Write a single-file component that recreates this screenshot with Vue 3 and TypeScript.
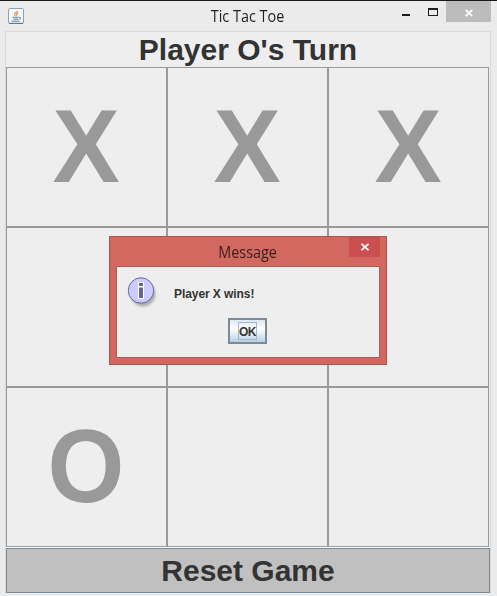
<script setup lang="ts">
import { ref } from 'vue'

type Mark = 'X' | 'O' | ''

const board = ref<Mark[]>(['X', 'X', 'X', '', '', '', 'O', '', ''])
const status = ref("Player O's Turn")
const dialogOpen = ref(true)

function reset() {
  board.value = board.value.map(() => '')
}
</script>

<template>
  <main class="window">
    <header class="titlebar">
      <svg class="java" viewBox="0 0 16 16" width="16" height="16">
        <rect x=".5" y=".5" width="15" height="15" rx="1.2" fill="#f5f8fa" stroke="#8ca0b2" />
        <path d="M1 15.3h14" stroke="#54708a" />
        <path d="M9.5 2.8C9 4.600 5.600 5 6.600 7l.9 1M10.300 4.800c-2 1-2.200 1.700-1.300 3" fill="none" stroke="#e08b3e" stroke-width="1.1" />
        <path d="M4.500 9.300h6M5.500 11.200h5M3.500 13.200h8M11 9.300c2.500-.4 2 1.800.2 2" fill="none" stroke="#567890" stroke-width=".95" />
      </svg>
      <h1 class="title"><span>Tic Tac Toe</span></h1>
      <div class="controls">
        <svg viewBox="0 0 50 24" width="50" height="24">
          <rect x="4" y="13" width="8" height="2" fill="#1c1c1c" />
          <path d="M30 7h10v8H30zM31 9v5h8V9z" fill="#1c1c1c" fill-rule="evenodd" />
        </svg>
        <button class="close" aria-label="Close">
          <svg viewBox="0 0 8 8" width="8" height="8"><path d="M.7.8l6.600 6.400M7.300.8L.7 7.200" stroke="#fff" stroke-width="1.7" /></svg>
        </button>
      </div>
    </header>

    <section class="client">
      <div class="status"><span>{{ status }}</span></div>
      <div class="grid">
        <div v-for="(mark, i) in board" :key="i" class="cell">
          <span :class="{ round: mark === 'O' }">{{ mark }}</span>
        </div>
      </div>
      <button class="reset" @click="reset"><span>Reset Game</span></button>
    </section>

    <div v-if="dialogOpen" class="dialog">
      <div class="dialog-bar">
        <span class="dialog-title">Message</span>
        <button class="dialog-close" aria-label="Close" @click="dialogOpen = false">
          <svg viewBox="0 0 8 8" width="8" height="8"><path d="M.5.8l7 6.400M7.500.8l-7 6.400" stroke="#fff" stroke-width="1.7" /></svg>
        </button>
      </div>
      <div class="dialog-body">
        <div class="message">
          <svg class="info" viewBox="0 0 32 32" width="32" height="32">
            <circle cx="16" cy="17" r="12.5" fill="#999" opacity=".75" class="shadow" />
            <circle cx="14" cy="13.500" r="12.700" fill="#ccccff" stroke="#666699" />
            <path d="M11 5h6v17h-6z" fill="#fff" />
            <path d="M12 6h4v3h-4zM12 10.500h4V21h-4z" fill="#666690" />
          </svg>
          <span class="message-text">Player X wins!</span>
        </div>
        <button class="ok" @click="dialogOpen = false"><span>OK</span></button>
      </div>
    </div>
  </main>
</template>

<style>
body {
  margin: 0;
  overflow: hidden;
}
</style>

<style scoped>
* {
  box-sizing: border-box;
}
button {
  margin: 0;
  padding: 0;
  border: 0;
  border-radius: 0;
  display: flex;
  align-items: center;
  justify-content: center;
}
svg {
  display: block;
}
.window {
  position: relative;
  width: 497px;
  height: 596px;
  border-top: 1px solid #1c171c;
  background: #ebebeb;
  font-family: "Liberation Sans", Arial, sans-serif;
  color: #333;
}
.titlebar {
  display: flex;
  height: 30px;
  padding-left: 8px;
}
.java {
  margin-top: 7px;
}
.title {
  flex: 1;
  margin: 0;
  padding: 5px 0 0 73px;
  text-align: center;
  font: 400 15.5px/20px "Open Sans", "Noto Sans", sans-serif;
  color: #222;
}
.title span {
  display: inline-block;
  white-space: nowrap;
  transform: scaleX(0.93);
}
.controls {
  display: flex;
  width: 99px;
  padding-right: 6px;
}
.controls svg {
  flex: none;
}
.controls > svg {
  margin-right: -2px;
}
.close {
  width: 45px;
  height: 21px;
  margin-left: auto;
  padding: 2px 0 0 1px;
  background: #bcbcbc;
}
.client {
  width: 486px;
  height: 563px;
  margin-left: 5px;
  border: 1px solid #d9d9d9;
  border-bottom: 0;
  background: #eee;
}
.status {
  height: 35px;
  text-align: center;
  font: 700 30px/36px "Liberation Sans", Arial, sans-serif;
}
.grid {
  display: grid;
  grid-template-columns: repeat(3, 161px);
  grid-template-rows: repeat(3, 160px);
  width: 484px;
  height: 481px;
  background: linear-gradient(#fff, #fff) bottom / 100% 1px no-repeat;
}
.cell {
  display: flex;
  align-items: center;
  justify-content: center;
  border: 1px solid #999;
  background: #eee;
  color: #999;
  font-size: 104.5px;
  font-weight: 700;
  line-height: 100px;
}
.cell span {
  transform: translate(-0.7px, -1px) scaleX(0.965);
}
.cell .round {
  transform: translate(-0.7px, -1px) scaleX(0.945);
}
.reset {
  width: 484px;
  height: 45px;
  border: 1px solid #7a8a99;
  background: #c0c0c0;
  color: #333;
  font: 700 30px/34px "Liberation Sans", Arial, sans-serif;
}
.dialog {
  position: absolute;
  left: 109px;
  top: 235px;
  width: 278px;
  height: 129px;
  border: 1px solid #a95651;
  background: #d36860;
}
.dialog-bar {
  position: relative;
  height: 29px;
  text-align: center;
}
.dialog-title {
  display: inline-block;
  font: 400 15.5px/30px "Open Sans", "Noto Sans", sans-serif;
  color: #391d1b;
  transform: scaleX(0.93);
}
.dialog-close {
  position: absolute;
  top: 0;
  right: 6px;
  width: 31px;
  height: 20px;
  background: #c94f50;
}
.dialog-body {
  width: 264px;
  height: 92px;
  margin-left: 6px;
  padding: 10px 10px 0;
  border: 1px solid #ad5b55;
  background: #eee;
}
.message {
  display: flex;
  height: 41px;
}
.shadow {
  filter: blur(1.2px);
}
.message-text {
  padding: 10px 0 0 15px;
  font: 700 12px/15px "Liberation Sans", Arial, sans-serif;
  letter-spacing: -0.07px;
}
.ok {
  width: 39px;
  height: 26px;
  margin-left: 101px;
  border: 2px solid #7a8a99;
  background: linear-gradient(#dce8f1, #fff 40%, #b8cfe5);
  color: #333;
  font: 700 12px/15px "Liberation Sans", Arial, sans-serif;
}
.ok span {
  display: block;
  height: 18px;
  border: 1px solid #a3b8cc;
  line-height: 18px;
  letter-spacing: -0.4px;
}
</style>
